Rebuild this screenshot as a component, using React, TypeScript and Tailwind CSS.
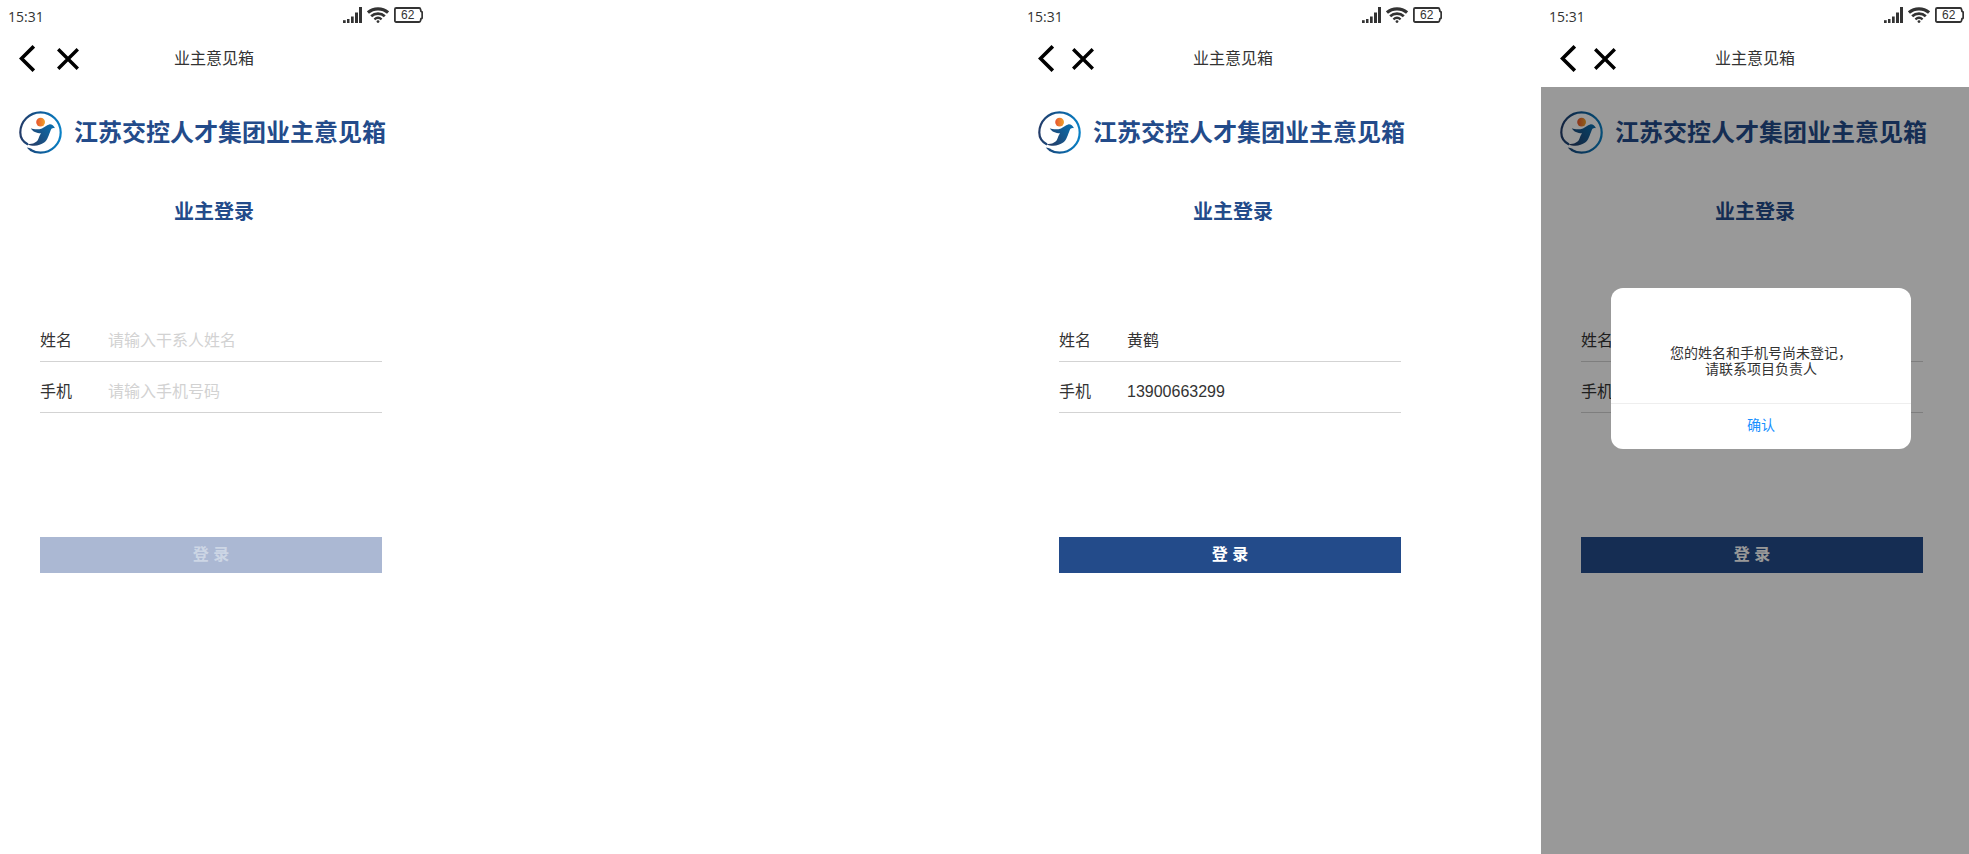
import { useId, useState } from "react";
import type { ReactNode } from "react";

function SignalIcon() {
  return (
    <svg width="19" height="16" viewBox="0 0 19 16" fill="#333" aria-hidden="true">
      <rect x="0" y="13.2" width="2.7" height="2.8" />
      <rect x="4" y="12" width="2.5" height="4" />
      <rect x="8" y="9.5" width="2.7" height="6.5" />
      <rect x="12" y="5.5" width="3" height="10.5" />
      <rect x="16" y="0" width="3" height="16" />
    </svg>
  );
}

function WifiIcon() {
  return (
    <svg width="22" height="16" viewBox="0 0 22 16" fill="none" stroke="#333" aria-hidden="true">
      <path d="M0.9 5.6C6.6 0.6 15.4 0.6 21.1 5.6" strokeWidth="3.2" />
      <path d="M4.2 9.2C8 5.8 14 5.8 17.8 9.2" strokeWidth="2.8" />
      <path d="M7.4 12.3C9.5 10.5 12.5 10.5 14.6 12.3" strokeWidth="2.3" />
      <circle cx="11" cy="14.6" r="1.4" fill="#333" stroke="none" />
    </svg>
  );
}

function Battery({ level }: { level: number }) {
  return (
    <span className="relative flex h-4 w-[29px] items-center pl-[7px] text-xs leading-4 text-[#333]">
      <svg className="absolute inset-0" width="29" height="16" viewBox="0 0 29 16" fill="none" stroke="#333" aria-hidden="true">
        <path
          d="M2.2 1H25.2C26 1 26.4 1.5 26.6 2.6L27 4.3C28 4.5 28.2 4.8 28.2 5.5V10.5C28.2 11.2 28 11.5 27 11.7L26.6 13.4C26.4 14.5 26 15 25.2 15H2.2C1.3 15 0.9 14.5 0.9 13.8V2.2C0.9 1.5 1.3 1 2.2 1Z"
          strokeWidth="1.8"
        />
      </svg>
      {level}
    </span>
  );
}

function Logo() {
  const id = useId();
  return (
    <svg width="43" height="43" viewBox="0 0 43 43" fill="none" aria-hidden="true">
      <defs>
        <linearGradient id={`${id}ring`} x1="0" y1="0" x2="43" y2="0" gradientUnits="userSpaceOnUse">
          <stop offset="0" stopColor="#243a66" />
          <stop offset="0.5" stopColor="#0f5a96" />
          <stop offset="1" stopColor="#0a83c9" />
        </linearGradient>
        <linearGradient id={`${id}bird`} x1="9" y1="33" x2="34" y2="14" gradientUnits="userSpaceOnUse">
          <stop offset="0" stopColor="#263a63" />
          <stop offset="1" stopColor="#0a6fae" />
        </linearGradient>
        <linearGradient id={`${id}sun`} x1="17" y1="0" x2="26" y2="0" gradientUnits="userSpaceOnUse">
          <stop offset="0" stopColor="#e7512f" />
          <stop offset="1" stopColor="#f0a32a" />
        </linearGradient>
      </defs>
      <path
        d="M9 33.4C4.4 31.2 1.3 26.8 1.3 21.5A20.2 20.2 0 0 1 21.5 1.3A20.2 20.2 0 0 1 41.7 21.5A20.2 20.2 0 0 1 21.5 41.7C17.7 41.7 14.2 40.7 11.2 38.8"
        stroke={`url(#${id}ring)`}
        strokeWidth="2.2"
      />
      <path d="M7.8 36.4C9.6 36.5 11.2 37 13 38L12 39.9C10.2 39 8.8 37.8 7.8 36.4Z" fill={`url(#${id}ring)`} />
      <circle cx="21.6" cy="11.1" r="4.4" fill={`url(#${id}sun)`} />
      <path
        d="M11.8 17.2C15 18.6 19.5 18.8 23 17.4C26.2 16 27.2 13.9 30.2 13.4C32.6 13.1 34.6 14.1 36 17.3C33.8 16.7 32.4 17.5 31.6 19.5C29.8 23.8 28.8 28.8 25.2 31.6C20.6 35 14 35.8 8.2 33.2C14 33.3 18 31.4 19.3 28C20.2 25.7 20.6 24.2 22 22.2C17.6 22.2 13.8 20.8 11.8 17.2Z"
        fill={`url(#${id}bird)`}
      />
    </svg>
  );
}

interface FieldProps {
  label: string;
  type: string;
  placeholder: string;
  value: string;
  onChange: (value: string) => void;
}

function Field({ label, type, placeholder, value, onChange }: FieldProps) {
  const id = useId();
  return (
    <div className="flex h-[51px] items-end border-b border-[#d3d3d3] pb-2 text-base leading-6">
      <label htmlFor={id} className="w-[68px] shrink-0">
        {label}
      </label>
      <input
        id={id}
        type={type}
        value={value}
        placeholder={placeholder}
        onChange={(e) => onChange(e.target.value)}
        className="h-6 min-w-0 flex-1 bg-transparent outline-none placeholder:text-[#d2d2d2]"
      />
    </div>
  );
}

interface PhoneProps {
  className: string;
  navGap: string;
  name?: string;
  mobile?: string;
  submittable?: boolean;
  children?: ReactNode;
}

function Phone({ className, navGap, name: initialName = "", mobile: initialMobile = "", submittable = true, children }: PhoneProps) {
  const [name, setName] = useState(initialName);
  const [mobile, setMobile] = useState(initialMobile);
  const enabled = submittable || (name !== "" && mobile !== "");

  return (
    <section className={`flex min-h-screen flex-col bg-white text-[#333] ${className}`}>
      <header className="pb-0.5">
        <div className="flex h-8 items-center justify-between pr-[5px] pl-2">
          <time className="pt-px font-['Open_Sans','Noto_Sans',sans-serif] text-sm leading-none">15:31</time>
          <div className="flex items-center gap-[5px] pb-0.5">
            <SignalIcon />
            <WifiIcon />
            <Battery level={62} />
          </div>
        </div>
        <div className="grid h-[53px] grid-cols-[1fr_auto_1fr] items-center">
          <div className={`flex items-center pl-[19px] ${navGap}`}>
            <button type="button" aria-label="返回">
              <svg className="block" width="16" height="27" viewBox="0 0 16 27" fill="none" stroke="#000" strokeWidth="3.6">
                <path d="M14.8 1.3L2.5 13.5L14.8 25.7" />
              </svg>
            </button>
            <button type="button" aria-label="关闭">
              <svg className="block" width="22" height="22" viewBox="0 0 22 22" fill="none" stroke="#000" strokeWidth="3.4">
                <path d="M1.2 1.2L20.8 20.8M20.8 1.2L1.2 20.8" />
              </svg>
            </button>
          </div>
          <h1 className="text-base">业主意见箱</h1>
        </div>
      </header>
      <div className="relative flex-1">
        <div className="flex items-center gap-3 pt-6 pl-[19px] text-[#234b8a]">
          <Logo />
          <p className="text-2xl leading-8 font-bold whitespace-nowrap">江苏交控人才集团业主意见箱</p>
        </div>
        <h2 className="mt-11 text-center text-xl leading-7 font-bold text-[#234b8a]">业主登录</h2>
        <form className="mt-[85px] pr-[46px] pl-10" onSubmit={(e) => e.preventDefault()}>
          <Field label="姓名" type="text" placeholder="请输入干系人姓名" value={name} onChange={setName} />
          <Field label="手机" type="tel" placeholder="请输入手机号码" value={mobile} onChange={setMobile} />
          <button
            type="submit"
            disabled={!enabled}
            className="mt-[124px] h-9 w-full bg-[#234b8a] text-base font-bold text-white disabled:bg-[#abb8d3] disabled:text-[#cdd6e5]"
          >
            登 录
          </button>
        </form>
        {children}
      </div>
    </section>
  );
}

function NoticeDialog() {
  return (
    <div className="absolute inset-0 flex items-start justify-center bg-black/40 pt-[201px] pl-3">
      <div role="alertdialog" aria-label="登录提示" className="w-[300px] rounded-xl bg-white text-center text-sm">
        <p className="px-8 pt-[57px] pb-[26px] leading-4">
          您的姓名和手机号尚未登记，
          <br />
          请联系项目负责人
        </p>
        <button type="button" className="h-[46px] w-full border-t border-[#eee] pb-1 text-[#1890ff]">
          确认
        </button>
      </div>
    </div>
  );
}

export default function App() {
  return (
    <main className="grid min-h-screen grid-cols-[428fr_591fr_428fr_94fr_428fr] bg-white font-['Liberation_Sans','Noto_Sans_CJK_SC',sans-serif]">
      <Phone className="col-start-1" navGap="gap-[22px]" submittable={false} />
      <Phone className="col-start-3" navGap="gap-[18px]" name="黄鹤" mobile="13900663299" />
      <Phone className="col-start-5" navGap="gap-[18px]">
        <NoticeDialog />
      </Phone>
    </main>
  );
}
